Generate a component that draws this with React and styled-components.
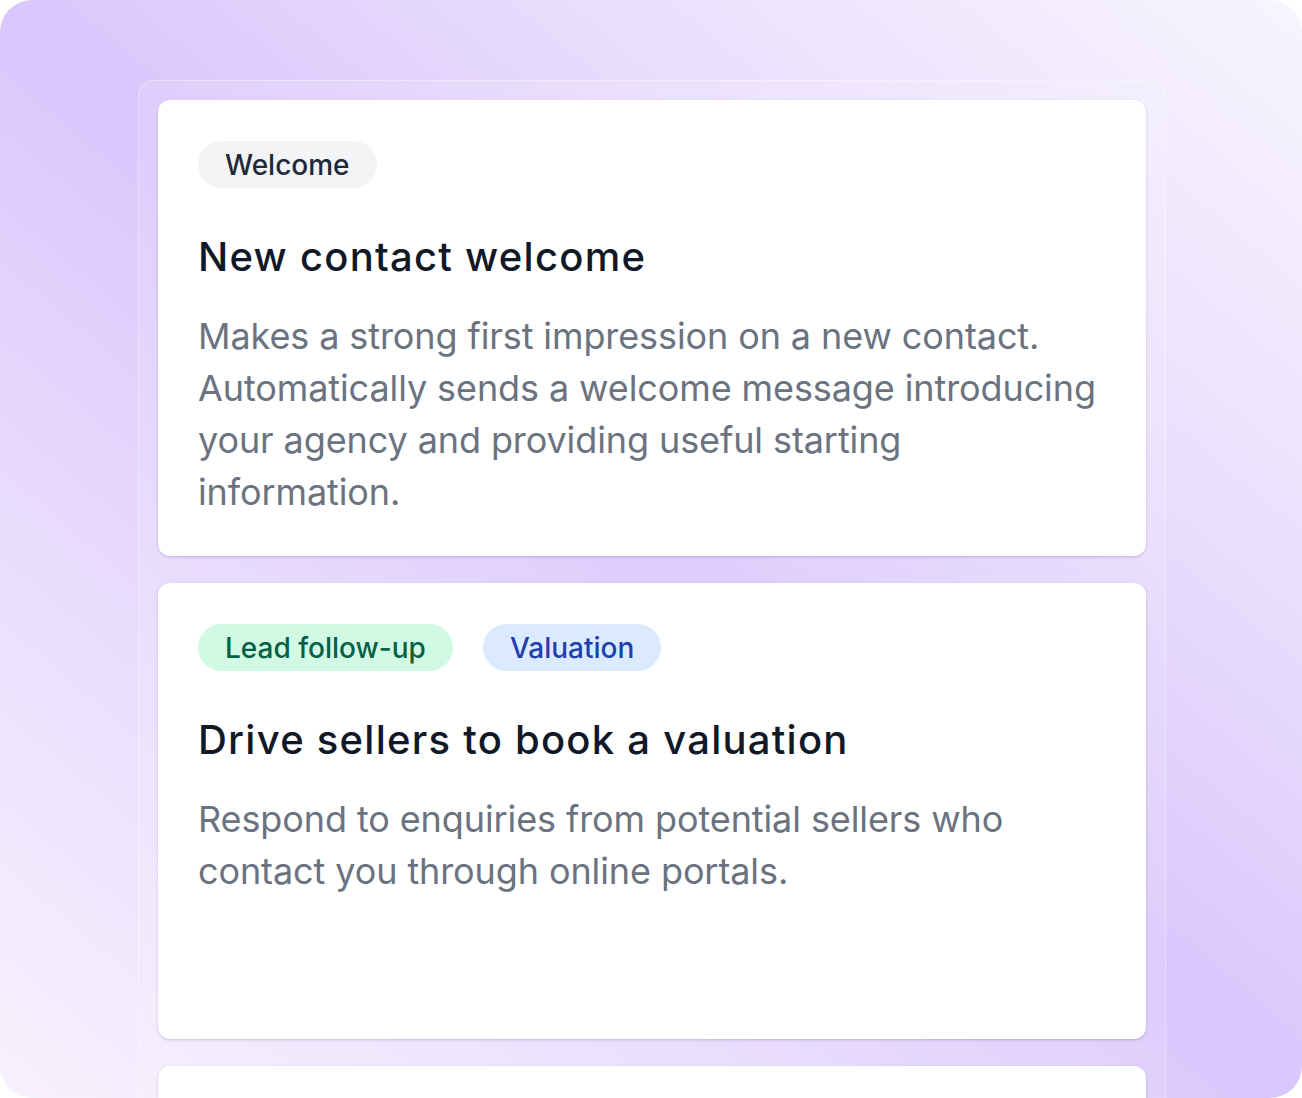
import React from 'react';
import styled, { createGlobalStyle } from 'styled-components';

const GlobalStyle = createGlobalStyle`
  html, body {
    margin: 0;
    padding: 0;
    background: #ffffff;
  }
  * {
    box-sizing: border-box;
  }
`;

const Frame = styled.div`
  width: 1302px;
  height: 1098px;
  overflow: hidden;
  border-radius: 32px;
  padding: 80px 136px 0 138px;
  background: linear-gradient(40deg, #f7f2fe 0%, #e8dbfd 28%, #dac6fc 50%, #e9defd 72%, #f8f5fe 100%);
`;

const Panel = styled.div`
  display: flex;
  flex-direction: column;
  gap: 27px;
  padding: 19px;
  border: 1px solid rgba(255, 255, 255, 0.35);
  border-bottom: none;
  border-radius: 16px 16px 0 0;
  background: rgba(255, 255, 255, 0.12);
  min-height: 1040px;
`;

const Card = styled.div`
  height: 456px;
  flex-shrink: 0;
  padding: 41px 40px;
  background: #ffffff;
  border-radius: 12px;
  box-shadow: 0 1px 3px rgba(90, 60, 150, 0.18), 0 1px 2px rgba(90, 60, 150, 0.1);
`;

const TagRow = styled.div`
  display: flex;
  gap: 30px;
`;

const tagColors = {
  gray: { bg: '#f3f4f6', fg: '#1f2937' },
  green: { bg: '#d1fae5', fg: '#065f46' },
  blue: { bg: '#dbeafe', fg: '#1e40af' },
};

const Tag = styled.span`
  display: inline-flex;
  align-items: center;
  height: 47px;
  padding: 0 27px;
  border-radius: 24px;
  font-family: 'Inter', 'Liberation Sans', sans-serif;
  font-size: 28px;
  font-weight: 500;
  background: ${(p) => tagColors[p.$tone].bg};
  color: ${(p) => tagColors[p.$tone].fg};
`;

const Title = styled.h2`
  margin: 44px 0 0;
  font-family: 'Inter', 'Liberation Sans', sans-serif;
  font-size: 40px;
  line-height: 50px;
  font-weight: 500;
  letter-spacing: 1.25px;
  color: #111827;
`;

const Description = styled.p`
  margin: 28px 0 0;
  font-family: 'Inter', 'Liberation Sans', sans-serif;
  font-size: 36px;
  line-height: 52px;
  font-weight: 400;
  letter-spacing: -0.1px;
  color: #6b7280;
`;

const templates = [
  {
    tags: [{ label: 'Welcome', tone: 'gray' }],
    title: 'New contact welcome',
    text: 'Makes a strong first impression on a new contact. Automatically sends a welcome message introducing your agency and providing useful starting information.',
  },
  {
    tags: [
      { label: 'Lead follow-up', tone: 'green' },
      { label: 'Valuation', tone: 'blue' },
    ],
    title: 'Drive sellers to book a valuation',
    text: 'Respond to enquiries from potential sellers who contact you through online portals.',
  },
  { tags: [], title: '', text: '' },
];

export default function App() {
  return (
    <>
      <GlobalStyle />
      <Frame>
        <Panel>
          {templates.map((t, idx) => (
            <Card key={idx}>
              {t.tags.length > 0 && (
                <TagRow>
                  {t.tags.map((tag) => (
                    <Tag key={tag.label} $tone={tag.tone}>{tag.label}</Tag>
                  ))}
                </TagRow>
              )}
              {t.title && <Title>{t.title}</Title>}
              {t.text && <Description>{t.text}</Description>}
            </Card>
          ))}
        </Panel>
      </Frame>
    </>
  );
}
